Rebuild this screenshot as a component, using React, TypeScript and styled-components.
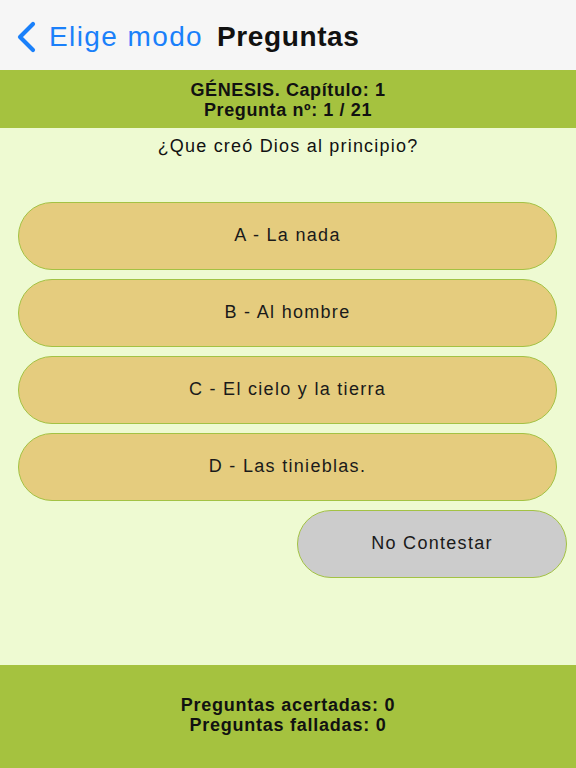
import React from 'react'
import styled, { createGlobalStyle } from 'styled-components'

const GlobalStyle = createGlobalStyle`
  html, body {
    margin: 0;
    padding: 0;
    background: #eefad2;
  }
  body {
    font-family: "Liberation Sans", Arial, sans-serif;
  }
`

const answers = ['A - La nada', 'B - Al hombre', 'C - El cielo y la tierra', 'D - Las tinieblas.']

const App = () => {
  return (
    <Screen>
      <GlobalStyle />
      <NavBar>
        <Back>
          <svg width="24" height="32" viewBox="0 0 24 32">
            <path d="M19 3 L6 16 L19 29" fill="none" stroke="#1a80fa" strokeWidth="4.2" strokeLinecap="round" strokeLinejoin="round" />
          </svg>
          <BackLabel>Elige modo</BackLabel>
        </Back>
        <NavTitle>Preguntas</NavTitle>
      </NavBar>
      <Header>
        <div>GÉNESIS. Capítulo: 1</div>
        <div>Pregunta nº: 1 / 21</div>
      </Header>
      <Content>
        <Question>¿Que creó Dios al principio?</Question>
        <Answers>
          {answers.map((a) => (
            <Answer key={a}>{a}</Answer>
          ))}
          <Skip>No Contestar</Skip>
        </Answers>
      </Content>
      <Footer>
        <div>Preguntas acertadas: 0</div>
        <div>Preguntas falladas: 0</div>
      </Footer>
    </Screen>
  )
}

export default App

export const Screen = styled.div`
  width: 576px;
  height: 768px;
  display: flex;
  flex-direction: column;
  background: #eefad2;
  overflow: hidden;
`

export const NavBar = styled.div`
  height: 70px;
  flex-shrink: 0;
  background: #f6f6f6;
  display: flex;
  align-items: center;
  padding-left: 14px;
  padding-top: 4px;
  box-sizing: border-box;
`

export const Back = styled.div`
  display: flex;
  align-items: center;
  gap: 11px;
  color: #1a80fa;
`

export const BackLabel = styled.span`
  font-size: 28px;
  letter-spacing: 1.4px;
  color: #1a80fa;
`

export const NavTitle = styled.span`
  font-size: 28px;
  font-weight: 700;
  letter-spacing: 0.6px;
  color: #111;
  margin-left: 14px;
`

export const Header = styled.div`
  height: 58px;
  flex-shrink: 0;
  background: #a5c23f;
  display: flex;
  flex-direction: column;
  justify-content: center;
  align-items: center;
  font-size: 18px;
  font-weight: 700;
  letter-spacing: 0.6px;
  line-height: 20px;
  color: #111;
  padding-top: 1px;
  box-sizing: border-box;
`

export const Content = styled.div`
  flex: 1;
  display: flex;
  flex-direction: column;
`

export const Question = styled.div`
  text-align: center;
  font-size: 18px;
  letter-spacing: 1.2px;
  color: #111;
  margin-top: 8px;
  line-height: 20px;
`

export const Answers = styled.div`
  display: flex;
  flex-direction: column;
  gap: 9px;
  margin-top: 46px;
  padding: 0 19px 0 18px;
`

export const Answer = styled.div`
  height: 68px;
  box-sizing: border-box;
  border-radius: 34px;
  background: #e5cc7e;
  border: 1.5px solid #a3c244;
  display: flex;
  align-items: center;
  justify-content: center;
  font-size: 18px;
  letter-spacing: 1.3px;
  color: #1a1a1a;
  padding-bottom: 2px;
`

export const Skip = styled(Answer)`
  width: 270px;
  align-self: flex-end;
  margin-right: -10px;
  background: #cccccc;
`

export const Footer = styled.div`
  height: 103px;
  flex-shrink: 0;
  background: #a5c23f;
  display: flex;
  flex-direction: column;
  justify-content: center;
  align-items: center;
  font-size: 18px;
  font-weight: 700;
  letter-spacing: 0.75px;
  line-height: 20px;
  color: #111;
  padding-bottom: 4px;
  box-sizing: border-box;
`
